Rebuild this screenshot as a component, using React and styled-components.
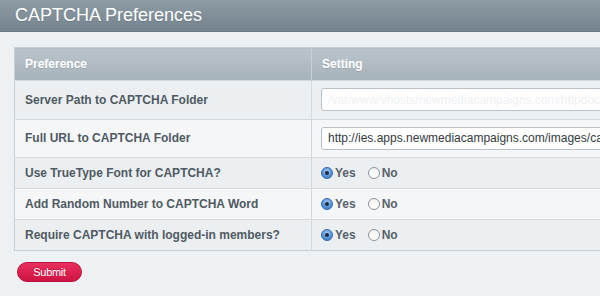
import React from 'react';
import styled, { createGlobalStyle } from 'styled-components';

const GlobalStyle = createGlobalStyle`
  html, body {
    margin: 0;
    padding: 0;
    width: 600px;
    height: 296px;
    overflow: hidden;
    background: #eef1f3;
    font-family: "Liberation Sans", Arial, sans-serif;
  }
`;

const Page = styled.div`
  width: 600px;
  height: 296px;
  overflow: hidden;
  background: #eef1f3;
`;

const TitleBar = styled.div`
  height: 32px;
  box-sizing: border-box;
  padding: 5px 0 0 15px;
  background: linear-gradient(#8d9ba5, #74838d);
  border-bottom: 1px solid #6a7983;
`;

const Title = styled.h1`
  margin: 0;
  font-size: 18px;
  font-weight: normal;
  color: #ffffff;
  text-shadow: 0 1px 0 rgba(0, 0, 0, 0.15);
`;

const Content = styled.div`
  padding: 15px 0 0 14px;
`;

const Table = styled.table`
  width: 640px;
  border-collapse: collapse;
  table-layout: fixed;
  border: 1px solid #c8d0d5;
`;

const HeadRow = styled.tr`
  height: 33px;
`;

const HeadCell = styled.th`
  padding: 0 0 0 10px;
  text-align: left;
  font-size: 12px;
  font-weight: bold;
  color: #ffffff;
  text-shadow: 0 1px 0 rgba(0, 0, 0, 0.12);
  background: linear-gradient(#bac5cb, #a6b2b9);
  border-left: ${p => (p.$first ? 'none' : '1px solid #c7d0d5')};
  width: ${p => (p.$first ? '286px' : 'auto')};
`;

const Row = styled.tr`
  height: ${p => (p.$tall ? '38.5px' : '31px')};
  background: ${p => (p.$alt ? '#f5f6f7' : '#eceff1')};
  border-top: 1px solid #d3d9dd;
`;

const Label = styled.td`
  padding: 0 0 0 10px;
  font-size: 12px;
  font-weight: bold;
  color: #4f5a63;
`;

const Setting = styled.td`
  padding: 0 0 0 9px;
  border-left: 1px solid #d3d9dd;
`;

const TextInput = styled.input`
  box-sizing: border-box;
  width: 320px;
  height: 23px;
  padding: 0 6px;
  border: 1px solid #b9c1c6;
  border-radius: 3px;
  background: #ffffff;
  font-family: "Liberation Sans", Arial, sans-serif;
  font-size: 12px;
  color: ${p => (p.$faded ? '#eef0f2' : '#333a40')};
  outline: none;
  display: block;
`;

const Radios = styled.div`
  display: flex;
  align-items: center;
  gap: 12px;
`;

const Option = styled.label`
  display: flex;
  align-items: center;
  gap: 2px;
  font-size: 12px;
  font-weight: bold;
  color: #56616a;
`;

const Dot = styled.span`
  width: 12px;
  height: 12px;
  box-sizing: border-box;
  border-radius: 50%;
  display: inline-flex;
  align-items: center;
  justify-content: center;
  border: 1px solid ${p => (p.$on ? '#3a6fb0' : '#8c9399')};
  background: ${p =>
    p.$on
      ? 'radial-gradient(circle at 50% 35%, #a9cdf5, #4f8fd8 60%, #2f6cbf)'
      : 'linear-gradient(#f2f2f2, #ffffff)'};
  &::after {
    content: '';
    width: 4px;
    height: 4px;
    border-radius: 50%;
    background: #1b2a3a;
    display: ${p => (p.$on ? 'block' : 'none')};
  }
`;

const Footer = styled.div`
  padding: 11px 0 0 3px;
`;

const SubmitButton = styled.button`
  width: 65px;
  height: 20px;
  border: 1px solid #b8123d;
  border-radius: 10px;
  background: linear-gradient(#e92f5d, #cf1443);
  color: #ffffff;
  font-family: "Liberation Sans", Arial, sans-serif;
  font-size: 11px;
  letter-spacing: -0.3px;
  padding: 0;
  display: block;
  text-shadow: 0 -1px 0 rgba(0, 0, 0, 0.2);
`;

const YesNo = () => (
  <Radios>
    <Option><Dot $on />Yes</Option>
    <Option><Dot />No</Option>
  </Radios>
);

const rows = [
  { label: 'Use TrueType Font for CAPTCHA?' },
  { label: 'Add Random Number to CAPTCHA Word' },
  { label: 'Require CAPTCHA with logged-in members?' },
];

const App = () => (
  <Page>
    <GlobalStyle />
    <TitleBar>
      <Title>CAPTCHA Preferences</Title>
    </TitleBar>
    <Content>
      <Table>
        <thead>
          <HeadRow>
            <HeadCell $first>Preference</HeadCell>
            <HeadCell>Setting</HeadCell>
          </HeadRow>
        </thead>
        <tbody>
          <Row $tall>
            <Label>Server Path to CAPTCHA Folder</Label>
            <Setting>
              <TextInput
                $faded
                readOnly
                value="/var/www/vhosts/newmediacampaigns.com/httpdocs/images/captchas/"
              />
            </Setting>
          </Row>
          <Row $tall $alt>
            <Label>Full URL to CAPTCHA Folder</Label>
            <Setting>
              <TextInput readOnly value="http://ies.apps.newmediacampaigns.com/images/captchas/" />
            </Setting>
          </Row>
          {rows.map((r, i) => (
            <Row key={i} $alt={i % 2 === 1}>
              <Label>{r.label}</Label>
              <Setting><YesNo /></Setting>
            </Row>
          ))}
        </tbody>
      </Table>
      <Footer>
        <SubmitButton>Submit</SubmitButton>
      </Footer>
    </Content>
  </Page>
);

export default App;
